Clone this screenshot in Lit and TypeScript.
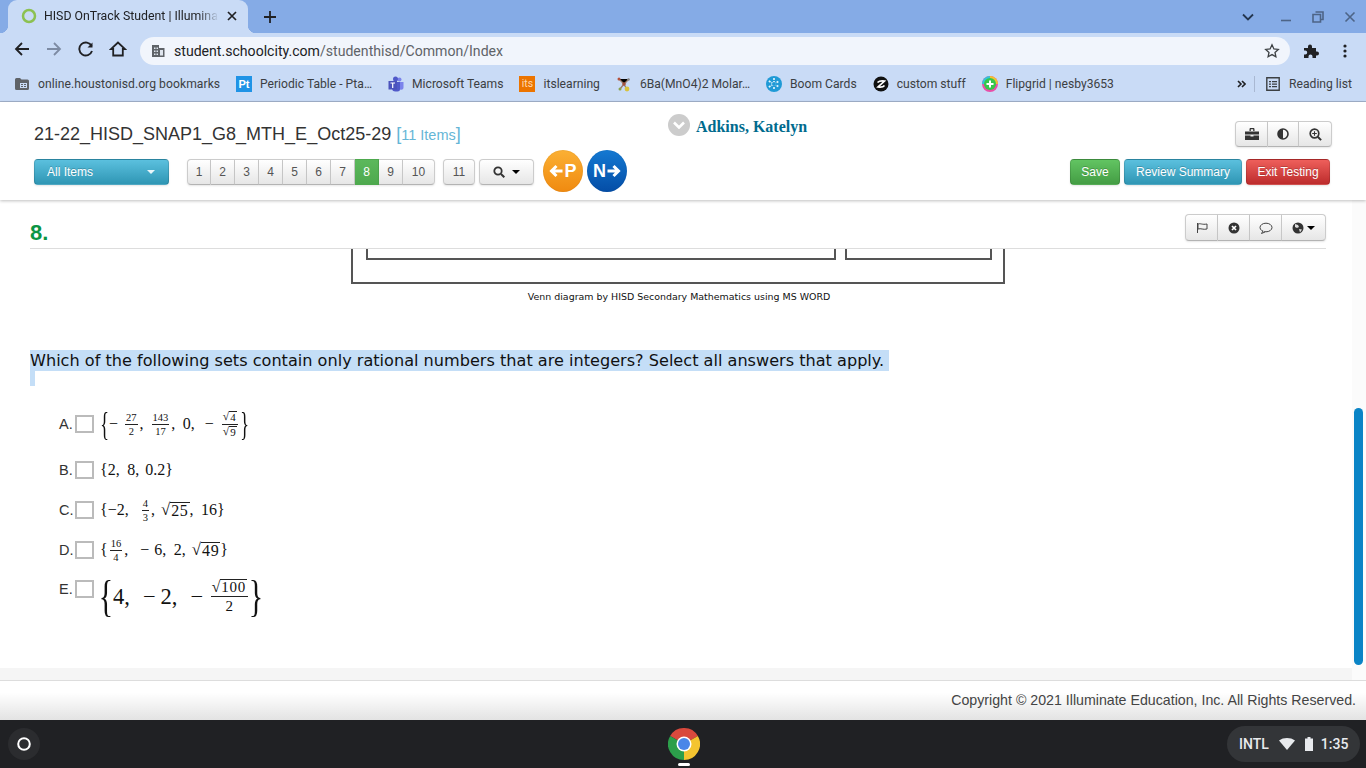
import { LitElement, html, css, svg } from "lit";
import { customElement } from "lit/decorators.js";

const ic = (w: number, h: number, body: unknown, cls = "") =>
  html`<svg class=${cls} width=${w} height=${h} viewBox="0 0 ${w} ${h}" aria-hidden="true">${body}</svg>`;

const frac = (a: unknown, b: unknown, cls = "") =>
  html`<span class="frac ${cls}"><span class="num">${a}</span><span class="den">${b}</span></span>`;
const root = (x: string) => html`<span class="sqrt"><span class="rad">√</span><span class="over">${x}</span></span>`;
const brace = (c: string, cls = "") => html`<span class="brace ${cls}">${c}</span>`;
const sp = html`<span class="sp"></span>`;
const sp2 = html`<span class="sp2"></span>`;
const sp7 = html`<span class="sp7"></span>`;

@customElement("app-root")
export class AppRoot extends LitElement {
  static styles = css`
    :host { display: flex; flex-direction: column; width: 1366px; height: 768px; overflow: hidden; background: #fff; font-family: "Liberation Sans", Arial, sans-serif; color: #333; }
    svg { display: block; flex: none; }

    /* browser chrome */
    .tabstrip { height: 33px; background: #85abe6; display: flex; align-items: center; padding-left: 8px; }
    .tab { position: relative; width: 240px; height: 33px; background: #c9dbf6; border-radius: 9px 9px 0 0; display: flex; align-items: center; box-sizing: border-box; padding-left: 13px; padding-bottom: 1px; font: 12.3px Roboto, sans-serif; color: #202124; }
    .tab::before, .tab::after { content: ""; position: absolute; bottom: 0; width: 8px; height: 8px; }
    .tab::before { left: -8px; background: radial-gradient(circle at 0 0, #85abe6 8px, #c9dbf6 8.5px); }
    .tab::after { right: -8px; background: radial-gradient(circle at 100% 0, #85abe6 8px, #c9dbf6 8.5px); }
    .tab-title { margin-left: 7px; width: 175px; white-space: nowrap; -webkit-mask-image: linear-gradient(90deg, #000 88%, transparent 100%); mask-image: linear-gradient(90deg, #000 88%, transparent 100%); }
    .tab-close { margin-left: 7px; }
    .tab-plus { margin-left: 15px; }
    .win { margin-left: auto; display: flex; align-items: center; gap: 20px; padding-right: 10px; }
    .win .chev { margin-right: 6px; }

    .toolbar { height: 32px; background: #c9dbf6; display: flex; align-items: center; padding: 0 0 0 13px; }
    .toolbar .nav { display: flex; align-items: center; gap: 14px; width: 127px; }
    .omni { width: 1150px; height: 28px; margin-top: 4px; box-sizing: border-box; background: #f1f5fc; border-radius: 14px; display: flex; align-items: center; padding: 0 10px 0 11px; font: 14.1px Roboto, sans-serif; color: #202124; }
    .omni .host { margin-left: 9px; }
    .omni .path { color: #5f6368; }
    .omni .star { margin-left: auto; }
    .tb-right { display: flex; align-items: center; margin-top: 4px; margin-left: 13px; gap: 24px; }

    .bookmarks { height: 37px; background: #c9dbf6; display: flex; align-items: center; padding: 1px 0 0 15px; font: 12.13px Roboto, sans-serif; color: #3c4043; box-sizing: border-box; border-bottom: 1px solid #a3b2cc; }
    .bm { display: flex; align-items: center; gap: 8px; margin-right: 16px; white-space: nowrap; }
    .bm .folder-lbl { margin-left: 1px; width: 182px; letter-spacing: .06px; }
    .fav { width: 16px; height: 16px; display: flex; align-items: center; justify-content: center; color: #fff; font-size: 10.5px; line-height: 16px; flex: none; }
    .fav.pt { background: #1f93e6; font-weight: 700; font-size: 11px; font-family: "Liberation Sans", sans-serif; }
    .fav.its { background: #ec7400; font-size: 10.5px; color: #ffd9b0; }
    .bm-right { margin-left: auto; display: flex; align-items: center; padding-right: 14px; }
    .sep { width: 1px; height: 16px; background: #a9b8d2; margin: 0 11px 0 8px; }
    .bm-right .lbl { margin-left: 9px; }

    /* test header */
    .head { position: relative; z-index: 2; height: 98px; box-sizing: border-box; background: #fff; box-shadow: 0 1px 3px rgba(0,0,0,.25); padding: 19px 36px 0 34px; display: grid; grid-template-columns: 634px auto 1fr; grid-template-rows: 38px 26px; }
    .title { font-size: 18px; color: #333; white-space: nowrap; line-height: 26px; }
    .title .cnt { font-size: 14.5px; color: #65b6d6; }
    .title .br { font-size: 18px; font-weight: 400; color: #65b6d6; }
    .who { display: flex; align-items: flex-start; gap: 6px; font: 700 16px "Liberation Serif", serif; color: #006b8e; line-height: 12px; }
    .who-ic { width: 22px; height: 22px; border-radius: 50%; background: #ccc; display: flex; align-items: center; justify-content: center; margin-top: -7px; }
    .tools { justify-self: end; align-self: start; margin-right: -2px; display: flex; }
    .btns { display: flex; align-items: center; grid-column: 1 / 3; }
    .btn-r { display: flex; gap: 4px; justify-self: end; grid-column: 3; }

    .b { height: 26px; box-sizing: border-box; display: flex; align-items: center; justify-content: center; font-size: 12px; color: #333; background: linear-gradient(#fff, #e6e6e6); border: 1px solid #ccc; border-bottom-color: #b3b3b3; box-shadow: 0 1px 2px rgba(0,0,0,.1); }
    .grp { display: flex; }
    .grp .b { border-left-width: 0; }
    .grp .b:first-child { border-left-width: 1px; border-radius: 4px 0 0 4px; }
    .grp .b:last-child { border-radius: 0 4px 4px 0; }
    .rnd { border-radius: 4px; }
    .col { color: #fff; border: 1px solid rgba(0,0,0,.12); border-radius: 4px; text-shadow: 0 -1px 0 rgba(0,0,0,.2); }
    .info { background: linear-gradient(#5bc0de, #2f96b4); }
    .good { background: linear-gradient(#62c462, #449d44); }
    .bad { background: linear-gradient(#ee5f5b, #bd2c2c); }
    .all { width: 135px; justify-content: flex-start; padding-left: 12px; position: relative; }
    .caret { width: 0; height: 0; border-left: 4px solid transparent; border-right: 4px solid transparent; border-top: 4px solid #000; }
    .all .caret { border-top-color: #e9f6fa; margin-left: auto; margin-right: 13px; }
    .pager { margin-left: 18px; }
    .pager .b { width: 24px; color: #555; }
    .pager .b.wide { width: 32px; }
    .pager .b.on { background: #5cb85c; background-image: linear-gradient(#5cb85c, #4ea94e); color: #fff; border-color: #4ea94e; }
    .p11 { margin-left: 8px; width: 32px; color: #555; }
    .srch { margin-left: 4px; width: 55px; gap: 7px; }
    .go { height: 42px; width: 40px; border-radius: 50%; display: flex; align-items: center; justify-content: center; gap: 1px; color: #fff; font-size: 18px; font-weight: 700; margin: -2px 0 0 0; box-shadow: inset 0 0 0 1px rgba(0,0,0,.04); }
    .go.p { background: linear-gradient(#fbb034, #f08a10); margin-left: 9px; }
    .go.n { background: linear-gradient(#1479d2, #044da6); margin-left: 4px; }

    /* content */
    .main { flex: 1; display: flex; min-height: 0; }
    .scroll { width: 1352px; padding: 0 26px 0 30px; box-sizing: border-box; overflow: hidden; background: #fff; height: 468px; }
    .track { width: 14px; box-sizing: border-box; padding: 208px 3px 0 2px; background: #fbfbfb; }
    .thumb { width: 9px; height: 257px; border-radius: 5px; background: #0a84c6; }
    .qhead { height: 49px; box-sizing: border-box; border-bottom: 1px solid #ddd; display: flex; justify-content: space-between; padding-top: 14px; }
    .qnum { font-size: 22px; font-weight: 700; color: #0b9444; line-height: 38px; }
    .qtools .b { width: 32px; height: 27px; }
    .qtools .b:first-child { width: 33px; }
    .qtools .b.globe { width: 44px; gap: 3px; }
    .venn { width: 654px; height: 35px; margin-left: 322px; box-sizing: border-box; border: 2px solid #555; border-top: 0; padding-left: 13px; display: flex; gap: 9px; align-items: flex-start; transform: translateX(-1px); }
    .venn i { display: block; height: 11px; box-sizing: border-box; border: 2px solid #555; border-top: 0; }
    .caption { text-align: center; font: 9.45px "DejaVu Sans", Verdana, sans-serif; color: #111; margin-top: 7px; line-height: 12px; padding-left: 2px; }
    .q { margin-top: 47px; font: 16.12px/21px "DejaVu Sans", Verdana, sans-serif; color: #111; }
    .q .sel { background: #c4def7; padding-right: 5px; display: inline-block; height: 21px; }
    .q .sel2 { display: block; width: 5px; height: 15px; background: #c4def7; }
    .opts { margin-top: 16px; padding-left: 29px; }
    .opt { display: flex; align-items: center; height: 40px; font-size: 14.5px; color: #333; }
    .opt.a { height: 44px; margin-bottom: 4px; }
    .opt.e { height: 50px; align-items: flex-start; }
    .opt.e .lab { margin-top: 11px; }
    .opt.e .cb { margin-top: 10px; }
    .lab { width: 16px; }
    .cb { width: 19px; height: 18px; box-sizing: border-box; border: 2px solid #bbb; background: #fff; }
    .m { margin-left: 6px; display: flex; align-items: center; font: 16px "Liberation Serif", serif; color: #111; white-space: pre; }
    .m .sp { display: inline-block; width: 6px; }
    .m .sp2 { display: inline-block; width: 5px; }
    .m .sp7 { display: inline-block; width: 7.5px; }
    .brace { display: inline-block; }
    .brace.big { font-size: 33px; font-weight: 400; width: 9px; text-align: center; transform: scaleX(.55); line-height: 30px; display: flex; justify-content: center; }
    .brace.huge { font-size: 44px; width: 12px; transform: scaleX(.68); line-height: 38px; display: flex; justify-content: center; }
    .frac { display: inline-flex; flex-direction: column; align-items: center; font-size: 10.5px; line-height: 11px; margin: 0 2px; }
    .frac .num { border-bottom: 1px solid #222; padding: 0 1px 1px; display: flex; align-items: flex-end; }
    .frac .den { padding-top: 1px; display: flex; }
    .sqrt { display: inline-flex; align-items: flex-end; }
    .rad { font-size: 1.05em; line-height: 1; }
    .over { border-top: 1px solid #222; line-height: 1; padding: 0 1px; letter-spacing: .7px; }
    .frac.tall { font-size: 11px; line-height: 13px; }
    .frac.lg { font-size: 15px; line-height: 17px; }
    .e-m { font-size: 22.5px; margin-top: 8px; }
    .e-m .sp { width: 6.5px; }
    .e-m .four { margin-left: 1px; }
    .e-m .frac.lg { margin: 0 2px 0 1px; }

    .foot { height: 40px; box-sizing: border-box; background: linear-gradient(#fff 30%, #e3e3e3); border-top: 1px solid #ddd; padding-right: 10px; text-align: right; font-size: 14.2px; line-height: 38px; color: #444; }
    .band { height: 12px; width: 1352px; background: #f5f5f5; }
    .mid { display: flex; flex-direction: column; }
    .stack { flex: 1; min-height: 0; display: flex; flex-direction: column; }

    /* shelf */
    .shelf { height: 48px; background: #202124; display: grid; grid-template-columns: 1fr auto 1fr; align-items: center; }
    .launch { margin-left: 8px; width: 32px; height: 32px; border-radius: 50%; background: #2b2c2f; display: flex; align-items: center; justify-content: center; }
    .chrome { display: flex; flex-direction: column; align-items: center; padding: 6px 0 0 2px; }
    .dash { width: 12px; height: 3px; background: #fff; border-radius: 2px; margin-top: 3px; }
    .tray { justify-self: end; margin-right: 6px; height: 36px; width: 133px; box-sizing: border-box; border-radius: 18px; background: #333538; display: flex; align-items: center; padding-left: 12px; color: #e8eaed; font: 500 14px Roboto, sans-serif; }
    .tray .t { margin-left: 8px; }
    .tray svg { margin-left: 10px; }
  `;

  render() {
    const s1 = svg;
    return html`
      <div class="tabstrip">
        <div class="tab">
          ${ic(16, 16, s1`<circle cx="8" cy="8" r="6" fill="none" stroke="#8cc152" stroke-width="2.5"/>`)}
          <div class="tab-title">HISD OnTrack Student | Illumina</div>
          <div class="tab-close">${ic(12, 12, s1`<path d="M2 2l8 8M10 2l-8 8" stroke="#202124" stroke-width="1.7"/>`)}</div>
        </div>
        <div class="tab-plus">${ic(14, 14, s1`<path d="M7 1v12M1 7h12" stroke="#202124" stroke-width="1.8"/>`)}</div>
        <div class="win">
          <div class="chev">${ic(12, 8, s1`<path d="M1 1.5l5 5 5-5" fill="none" stroke="#24364f" stroke-width="1.8"/>`)}</div>
          ${ic(12, 12, s1`<path d="M1 9.5h10" stroke="#4d6487" stroke-width="1.6"/>`)}
          ${ic(12, 12, s1`<path d="M3.5 1h7.5v7.5H8.5M1 3.5h7.5V11H1z" fill="none" stroke="#4d6487" stroke-width="1.6"/>`)}
          ${ic(12, 12, s1`<path d="M1.5 1.5l9 9M10.5 1.5l-9 9" stroke="#4d6487" stroke-width="1.6"/>`)}
        </div>
      </div>

      <div class="toolbar">
        <div class="nav">
          ${ic(18, 16, s1`<path d="M16 8H3M9 2L3 8l6 6" fill="none" stroke="#202124" stroke-width="1.8"/>`)}
          ${ic(18, 16, s1`<path d="M2 8h13M9 2l6 6-6 6" fill="none" stroke="#7d8ba3" stroke-width="1.8"/>`)}
          ${ic(18, 16, s1`<path d="M14.6 5A6.5 6.5 0 1 0 15 10" fill="none" stroke="#202124" stroke-width="1.9"/><path d="M15.5 1.5v5h-5z" fill="#202124"/>`)}
          ${ic(18, 16, s1`<path d="M9 1.5L2 8h2.2v6.5h9.6V8H16z" fill="none" stroke="#202124" stroke-width="1.8"/>`)}
        </div>
        <div class="omni">
          ${ic(14, 14, s1`<path d="M1 1h7v3h5.5v9H1z" fill="#5f6368"/><path d="M3 3.5h1.5V5H3zM5.5 3.5H7V5H5.5zM3 6.5h1.5V8H3zM5.5 6.5H7V8H5.5zM3 9.5h1.5V11H3zM5.5 9.5H7V11H5.5zM9 6h3v5.5H9z" fill="#dfe5ee"/>`)}
          <span class="host">student.schoolcity.com<span class="path">/studenthisd/Common/Index</span></span>
          <span class="star">${ic(16, 16, s1`<path d="M8 1.8l1.9 4.1 4.4.5-3.3 3 .9 4.4L8 11.6l-3.9 2.2.9-4.4-3.3-3 4.4-.5z" fill="none" stroke="#3c4043" stroke-width="1.3"/>`)}</span>
        </div>
        <div class="tb-right">
          ${ic(16, 16, s1`<path d="M1 5h4V3.5a2 2 0 1 1 4 0V5h4v3.5h1a2 2 0 1 1 0 4h-1V15H9.5v-1.5a2 2 0 1 0-4 0V15H1v-3.5h1.2a2 2 0 1 0 0-4H1z" fill="#202124"/>`)}
          ${ic(4, 16, s1`<circle cx="2" cy="3" r="1.6" fill="#202124"/><circle cx="2" cy="8" r="1.6" fill="#202124"/><circle cx="2" cy="13" r="1.6" fill="#202124"/>`)}
        </div>
      </div>

      <div class="bookmarks">
        <div class="bm">${ic(14, 12, s1`<path d="M0 1.5A1.5 1.5 0 0 1 1.5 0H5l1.5 1.5h6A1.5 1.5 0 0 1 14 3v7.5a1.5 1.5 0 0 1-1.5 1.5h-11A1.5 1.5 0 0 1 0 10.5z" fill="#5f6368"/><path d="M5 5h7v5H5z" fill="#c9dbf6"/><path d="M6 6h2v1H6zM9 6h2v1H9zM6 8h2v1H6zM9 8h2v1H9z" fill="#5f6368"/>`)}<span class="folder-lbl">online.houstonisd.org bookmarks</span></div>
        <div class="bm"><span class="fav pt">Pt</span>Periodic Table - Pta…</div>
        <div class="bm">${ic(16, 16, s1`<circle cx="11.5" cy="3.5" r="2" fill="#7b83eb"/><circle cx="7.5" cy="3" r="2.5" fill="#5059c9"/><path d="M9 6h6.5v5a2.5 2.5 0 0 1-5 .5z" fill="#7b83eb"/><path d="M4 6h8v7a2.5 2.5 0 0 1-2.5 2.5h-2A3.5 3.5 0 0 1 4 12z" fill="#5059c9"/><path d="M0.5 5h8.5v8.5H.5z" fill="#4b53bc"/><path d="M2.5 7h4.5M4.7 7v5" stroke="#fff" stroke-width="1.2"/>`)}Microsoft Teams</div>
        <div class="bm"><span class="fav its">its</span>itslearning</div>
        <div class="bm">${ic(16, 16, s1`<path d="M3 3l5 5 5-5M8 8l-4 5M8 8l3 6" stroke="#9a7a68" stroke-width="1.3"/><circle cx="3" cy="3" r="1.5" fill="#b5523c"/><circle cx="12.5" cy="3.5" r="1.3" fill="#8a8a8a"/><circle cx="8" cy="8" r="1.8" fill="#a5533f"/><circle cx="11" cy="13" r="2.4" fill="#d8c23c"/><circle cx="4" cy="13" r="1.5" fill="#8aa24c"/>`)}6Ba(MnO4)2 Molar…</div>
        <div class="bm">${ic(16, 16, s1`<circle cx="8" cy="8" r="8" fill="#1f9ad6"/><path d="M8 2v12M2.8 5l10.4 6M2.8 11l10.4-6" stroke="#e6f6fd" stroke-width="1.6" stroke-dasharray="2 1"/><circle cx="8" cy="8" r="2" fill="#1f9ad6"/>`)}Boom Cards</div>
        <div class="bm">${ic(16, 16, s1`<circle cx="8" cy="8" r="7.5" fill="#111"/><path d="M4.5 6.5c2-2 4-2 7-1.5L5 11c3 .5 5 .5 6.5-1.5" fill="none" stroke="#fff" stroke-width="1.7"/>`)}<span>custom stuff</span></div>
        <div class="bm">${ic(16, 16, s1`<circle cx="8" cy="8" r="8" fill="#e84fa8"/><path d="M8 0a8 8 0 0 1 8 8H8z" fill="#f2c230"/><path d="M0 8a8 8 0 0 1 8-8v8z" fill="#35c3d8"/><circle cx="8" cy="8" r="6" fill="#35c74a"/><path d="M7 4.500h2V7h2.500v2H9v2.500H7V9H4.500V7H7z" fill="#fff"/>`)}Flipgrid | nesby3653</div>
        <div class="bm-right">
          ${ic(9, 8, s1`<path d="M1 1l3 3-3 3M5 1l3 3-3 3" fill="none" stroke="#202124" stroke-width="1.6"/>`)}
          <span class="sep"></span>
          ${ic(14, 14, s1`<path d="M.8.8h12.4v12.4H.8z" fill="none" stroke="#3c4043" stroke-width="1.4"/><path d="M3 4h2v1.2H3zM6 4h5v1.2H6zM3 6.5h2v1.2H3zM6 6.5h5v1.2H6zM3 9h2v1.2H3zM6 9h5v1.2H6z" fill="#3c4043"/>`)}
          <span class="lbl">Reading list</span>
        </div>
      </div>

      <div class="head">
        <div class="title">21-22_HISD_SNAP1_G8_MTH_E_Oct25-29 <span class="br">[</span><span class="cnt">11 Items</span><span class="br">]</span></div>
        <div class="who"><div class="who-ic">${ic(12, 8, s1`<path d="M1 1.5l5 5 5-5" fill="none" stroke="#fff" stroke-width="2.6"/>`)}</div><span>Adkins, Katelyn</span></div>
        <div class="tools grp">
          <div class="b" style="width:33px">${ic(14, 12, s1`<path d="M0 3.5h14V6.5H0zM0 7.5h5.5v1h3v-1H14V12H0zM4.5 3V1.2C4.5.5 5 0 5.7 0h2.6c.7 0 1.2.5 1.2 1.2V3H8.2V1.3H5.8V3z" fill="#333"/>`)}</div>
          <div class="b" style="width:31px">${ic(12, 12, s1`<circle cx="6" cy="6" r="5" fill="none" stroke="#333" stroke-width="1.6"/><path d="M6 1a5 5 0 0 0 0 10z" fill="#333"/>`)}</div>
          <div class="b" style="width:33px">${ic(13, 13, s1`<circle cx="5.500" cy="5.500" r="4.300" fill="none" stroke="#333" stroke-width="1.7"/><path d="M8.700 8.700l3.400 3.400" stroke="#333" stroke-width="2"/><path d="M3.200 5.500h4.600M5.500 3.200v4.600" stroke="#333" stroke-width="1.100"/>`)}</div>
        </div>
        <div class="btns">
          <div class="b col info all">All Items<span class="caret"></span></div>
          <div class="grp pager">
            ${["1","2","3","4","5","6","7"].map((n) => html`<div class="b">${n}</div>`)}
            <div class="b on">8</div><div class="b">9</div><div class="b wide">10</div>
          </div>
          <div class="b rnd p11">11</div>
          <div class="b rnd srch">${ic(12, 12, s1`<circle cx="5" cy="5" r="3.700" fill="none" stroke="#333" stroke-width="1.800"/><path d="M8 8l3.300 3.300" stroke="#333" stroke-width="2"/>`)}<span class="caret"></span></div>
          <div class="go p">${ic(14, 14, s1`<path d="M13.500 7H3M7.500 2L2.500 7l5 5" fill="none" stroke="#fff" stroke-width="3"/>`)}<span>P</span></div>
          <div class="go n"><span>N</span>${ic(14, 14, s1`<path d="M.5 7H11M6.500 2l5 5-5 5" fill="none" stroke="#fff" stroke-width="3"/>`)}</div>
        </div>
        <div class="btn-r">
          <div class="b col good" style="width:50px">Save</div>
          <div class="b col info" style="width:118px">Review Summary</div>
          <div class="b col bad" style="width:84px">Exit Testing</div>
        </div>
      </div>

      <div class="stack">
        <div class="main">
          <div class="mid">
            <div class="scroll">
              <div class="qhead">
                <div class="qnum">8.</div>
                <div class="grp qtools">
                  <div class="b">${ic(12, 12, s1`<path d="M1.500 1v10" stroke="#444"/><path d="M2 2c2.500-1 4 1 9 0v5c-4 1-6-1-9 0z" fill="none" stroke="#444"/>`)}</div>
                  <div class="b">${ic(12, 12, s1`<circle cx="6" cy="6" r="5.500" fill="#333"/><path d="M4 4l4 4M8 4l-4 4" stroke="#fff" stroke-width="1.700"/>`)}</div>
                  <div class="b">${ic(14, 12, s1`<ellipse cx="7" cy="5.500" rx="6" ry="4.300" fill="none" stroke="#444"/><path d="M4 9l-1.500 2.500L6 10" fill="#fff" stroke="#444"/>`)}</div>
                  <div class="b globe">${ic(12, 12, s1`<circle cx="6" cy="6" r="5.500" fill="#333"/><path d="M3 2l3 1 1 2-2 1-2-1zM7 7l3 .5-2 3z" fill="#ddd"/>`)}<span class="caret"></span></div>
                </div>
              </div>
              <div class="venn"><i style="width:470px"></i><i style="width:147px"></i></div>
              <div class="caption">Venn diagram by HISD Secondary Mathematics using MS WORD</div>
              <div class="q"><span class="sel">Which of the following sets contain only rational numbers that are integers? Select all answers that apply.</span><span class="sel2"></span></div>
              <div class="opts">
                <div class="opt a">
                  <span class="lab">A.</span><span class="cb"></span>
                  <span class="m">${brace("{", "big")}<span>−</span>${sp2}${frac("27", "2")}<span>,</span>${sp}${frac("143", "17")}<span>,</span>${sp7}<span>0,</span>${sp2}${sp2}<span>−</span>${sp}${frac(root("4"), root("9"), "tall")}${brace("}", "big")}</span>
                </div>
                <div class="opt">
                  <span class="lab">B.</span><span class="cb"></span>
                  <span class="m">{2,${sp7}8,${sp}0.2}</span>
                </div>
                <div class="opt">
                  <span class="lab">C.</span><span class="cb"></span>
                  <span class="m">{−2,${sp}${sp2}${frac("4", "3")},${sp}${root("25")},${sp7}16}</span>
                </div>
                <div class="opt">
                  <span class="lab">D.</span><span class="cb"></span>
                  <span class="m">{${frac("16", "4")},${sp}${sp}−${sp2}6,${sp7}2,${sp}${root("49")}}</span>
                </div>
                <div class="opt e">
                  <span class="lab">E.</span><span class="cb"></span>
                  <span class="m e-m">${brace("{", "huge")}<span class="four">4,</span>${sp}${sp}−${sp2}2,${sp}${sp}−${sp}${frac(root("100"), "2", "lg")}${brace("}", "huge")}</span>
                </div>
              </div>
            </div>
            <div class="band"></div>
          </div>
          <div class="track"><div class="thumb"></div></div>
        </div>
        <div class="foot">Copyright © 2021 Illuminate Education, Inc. All Rights Reserved.</div>
      </div>

      <div class="shelf">
        <div class="launch">${ic(14, 14, s1`<circle cx="7" cy="7" r="5.800" fill="none" stroke="#fff" stroke-width="2"/>`)}</div>
        <div class="chrome">
          ${ic(32, 32, s1`<path d="M16 16L2.140 8A16 16 0 0 1 29.860 8z" fill="#d9493d"/><path d="M16 16L29.860 8A16 16 0 0 1 16 32z" fill="#f4c430"/><path d="M16 16V32A16 16 0 0 1 2.140 8z" fill="#2c9f4b"/><circle cx="16" cy="16" r="7.500" fill="#fff"/><circle cx="16" cy="16" r="6" fill="#4a86e8"/>`)}
          <span class="dash"></span>
        </div>
        <div class="tray">
          <span>INTL</span>
          ${ic(16, 12, s1`<path d="M0 2.500C4.500-.800 11.500-.800 16 2.500L8 12z" fill="#e8eaed"/>`)}
          ${ic(8, 14, s1`<path d="M2.500 0h3v1.500H8V14H0V1.500h2.500z" fill="#e8eaed"/>`)}
          <span class="t">1:35</span>
        </div>
      </div>
    `;
  }
}
